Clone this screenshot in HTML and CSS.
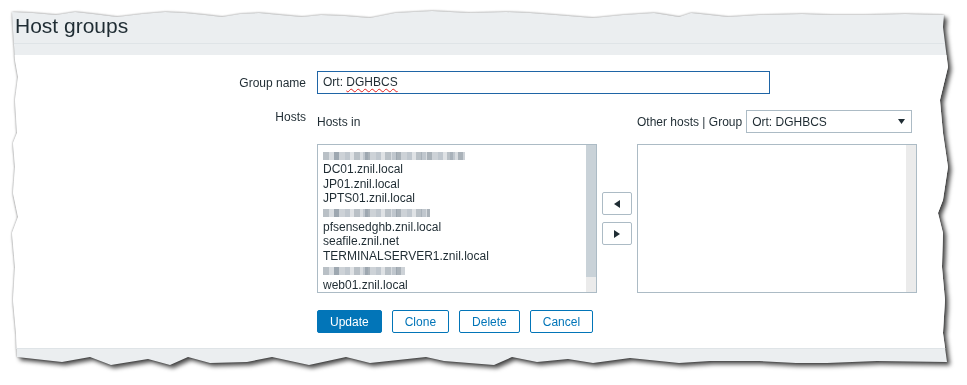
FILE: index.html
```html
<!DOCTYPE html>
<html lang="en">
<head>
  <meta charset="UTF-8" />
  <title>Host groups</title>
  <link rel="stylesheet" href="styles.css">
</head>
<body>
  <div class="shot">
    <div class="paper">
      <div class="header">
        <h1>Host groups</h1>
      </div>
      <div class="article">
        <div class="form-box">
          <div class="form">
            <div class="label label-mid">Group name</div>
            <div class="input">Ort: <span class="misspelt">DGHBCS</span></div>

            <div class="label">Hosts</div>
            <div class="tween">
              <div class="tween-head">Hosts in</div>
              <div></div>
              <div class="tween-head">
                Other hosts | Group
                <div class="select">
                  <span>Ort: DGHBCS</span>
                  <svg width="7" height="5" viewBox="0 0 7 5"><path d="M0 0h7L3.5 5z" fill="#1f2c33"/></svg>
                </div>
              </div>

              <div class="listbox">
                <div class="options">
                  <div class="option"><span class="mosaic mosaic-a"></span></div>
                  <div class="option">DC01.znil.local</div>
                  <div class="option">JP01.znil.local</div>
                  <div class="option">JPTS01.znil.local</div>
                  <div class="option"><span class="mosaic mosaic-b"></span></div>
                  <div class="option">pfsensedghb.znil.local</div>
                  <div class="option">seafile.znil.net</div>
                  <div class="option">TERMINALSERVER1.znil.local</div>
                  <div class="option"><span class="mosaic mosaic-c"></span></div>
                  <div class="option">web01.znil.local</div>
                </div>
                <div class="scrollbar"><div class="thumb"></div></div>
              </div>
              <div class="movers">
                <button class="move"><svg width="6" height="8" viewBox="0 0 6 8"><path d="M6 0v8L0 4z" fill="#1f2c33"/></svg></button>
                <button class="move"><svg width="6" height="8" viewBox="0 0 6 8"><path d="M0 0v8l6-4z" fill="#1f2c33"/></svg></button>
              </div>
              <div class="listbox">
                <div class="options"></div>
                <div class="scrollbar"></div>
              </div>
            </div>

            <div></div>
            <div class="actions">
              <button class="btn btn-main">Update</button>
              <button class="btn">Clone</button>
              <button class="btn">Delete</button>
              <button class="btn">Cancel</button>
            </div>
          </div>
        </div>
      </div>
    </div>
  </div>
</body>
</html>
```

FILE: styles.css
```css
* { box-sizing: border-box; }
body {
  margin: 0;
  background: #fff;
  font-family: "Liberation Sans", Arial, sans-serif;
  font-size: 12px;
  color: #1f2c33;
}
.shot {
  width: 967px;
  height: 385px;
  filter: drop-shadow(0 0 1px rgba(0,0,0,0.4)) drop-shadow(3px 3px 2px rgba(0,0,0,0.7));
}
.paper {
  width: 967px;
  height: 385px;
  background: #ebeef0;
  clip-path: polygon(
    12px 12px, 33px 13px, 56px 15px, 75px 12px, 93px 14px, 117px 17px, 142px 14px, 165px 12px,
    185px 13px, 205px 15px, 222px 17px, 240px 14px, 259px 13px, 280px 15px, 302px 17px, 321px 15px,
    345px 16px, 370px 18px, 395px 13px, 432px 11px, 469px 13px, 506px 12px, 530px 13px, 556px 15px,
    593px 18px, 623px 15px, 654px 13px, 679px 17px, 691px 13px, 710px 15px, 728px 17px, 759px 15px,
    802px 14px, 830px 15px, 864px 15px, 905px 14px, 944px 15px,
    943px 27px, 948px 67px, 940px 100px, 943px 133px, 948px 167px, 943px 200px, 938px 213px,
    943px 233px, 942px 267px, 945px 300px, 943px 333px, 947px 362px,
    877px 361px, 827px 363px, 796px 363px, 759px 361px, 710px 361px, 679px 363px, 630px 358px,
    593px 363px, 568px 359px, 537px 362px, 512px 357px, 494px 365px, 444px 361px, 426px 357px,
    370px 363px, 346px 357px, 309px 365px, 272px 357px, 247px 362px, 210px 363px, 188px 357px,
    170px 365px, 148px 359px, 111px 365px, 90px 357px, 62px 362px, 17px 357px,
    16px 333px, 13px 300px, 15px 267px, 12px 233px, 18px 217px, 13px 193px, 15px 167px,
    13px 143px, 17px 133px, 15px 100px, 18px 77px, 15px 60px, 13px 30px
  );
}
.header {
  height: 44px;
  padding: 8px 0 0 15px;
  border-bottom: 1px solid #dfe4e7;
}
.header h1 {
  margin: 0;
  font-size: 21px;
  font-weight: normal;
  line-height: 35px;
}
.article {
  padding-top: 11px;
}
.form-box {
  background: #fff;
  border-bottom: 1px solid #dfe4e7;
}
.form {
  display: grid;
  grid-template-columns: 306px auto;
  column-gap: 11px;
  row-gap: 16px;
  padding: 16px 0 15px;
}
.label {
  text-align: right;
  line-height: 14px;
}
.label-mid { align-self: center; }
.input {
  width: 453px;
  height: 23px;
  border: 1px solid #1f65a6;
  padding: 0 5px;
  line-height: 21px;
}
.misspelt {
  text-decoration: underline wavy #e02020;
  text-decoration-thickness: 1px;
  text-underline-offset: 2px;
}
.tween {
  display: grid;
  grid-template-columns: 280px 40px 280px;
  grid-template-rows: 23px 149px;
  row-gap: 11px;
}
.tween-head {
  display: flex;
  align-items: center;
  gap: 4px;
}
.select {
  width: 166px;
  height: 23px;
  border: 1px solid #acbbc5;
  padding: 0 6px 0 5px;
  display: flex;
  align-items: center;
  justify-content: space-between;
}
.listbox {
  display: flex;
  border: 1px solid #acbbc5;
  overflow: hidden;
}
.options {
  flex: 1;
  padding: 3px 0 0 5px;
}
.option {
  line-height: 14.4px;
  height: 14.4px;
  white-space: nowrap;
}
.mosaic {
  display: inline-block;
  height: 8px;
  vertical-align: middle;
  background:
    repeating-linear-gradient(90deg, transparent 0 11px, rgba(120,135,150,0.25) 11px 16px, transparent 16px 29px),
    repeating-linear-gradient(90deg, #b9c0c6 0 6px, #d8dce0 6px 11px, #aab2b9 11px 16px, #cdd2d7 16px 22px, #c0c7ce 22px 27px, #dfe2e5 27px 31px);
}
.mosaic-a { width: 142px; }
.mosaic-b { width: 107px; }
.mosaic-c { width: 82px; }
.scrollbar {
  width: 10px;
  background: #ebebeb;
}
.thumb {
  height: 132px;
  background: #c9d2d8;
}
.movers {
  display: flex;
  flex-direction: column;
  align-items: center;
  justify-content: center;
  gap: 7px;
}
.move {
  width: 30px;
  height: 23px;
  padding: 0;
  border: 1px solid #acbbc5;
  border-radius: 2px;
  background: #fff;
  display: flex;
  align-items: center;
  justify-content: center;
}
.actions {
  display: flex;
  gap: 10px;
  margin-top: 1px;
}
.btn {
  height: 23px;
  padding: 0 12px;
  border: 1px solid #0275b8;
  border-radius: 2px;
  background: #fff;
  color: #0275b8;
  font-family: "Liberation Sans", Arial, sans-serif;
  font-size: 12px;
}
.btn-main {
  background: #0275b8;
  color: #fff;
}
```
